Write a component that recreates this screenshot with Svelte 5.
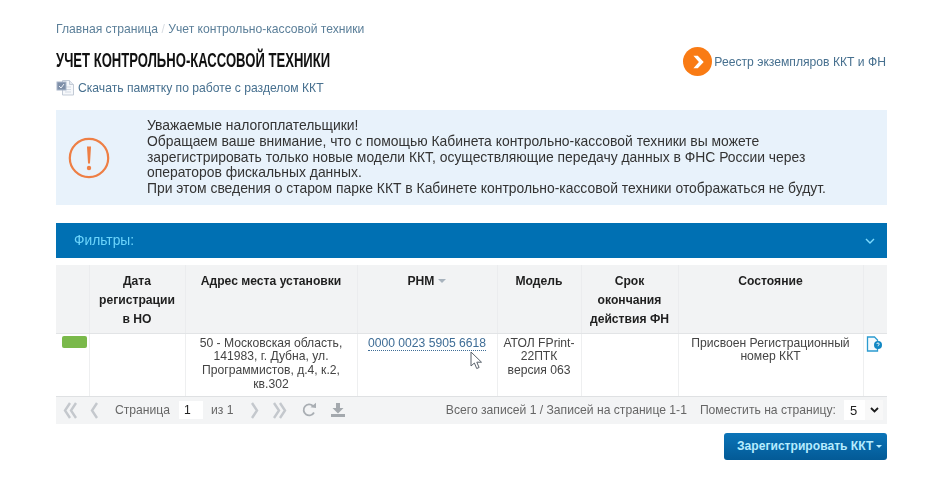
<script>
  const columns = [
    { title: 'Дата регистрации в НО', width: 96 },
    { title: 'Адрес места установки', width: 172 },
    { title: 'РНМ', width: 140, sort: true },
    { title: 'Модель', width: 84 },
    { title: 'Срок окончания действия ФН', width: 97 },
    { title: 'Состояние', width: 185 }
  ]
</script>

<div class="page">
  <nav class="crumbs">
    <a href="#home">Главная страница</a><span class="sep">/</span><a href="#kkt">Учет контрольно-кассовой техники</a>
  </nav>

  <div class="head">
    <div>
      <h1>Учет контрольно-кассовой техники</h1>
      <a class="memo" href="#memo">
        <svg width="19" height="17" viewBox="0 0 19 17">
          <path d="M6.5 1.5h7l4 4v10.5h-11z" fill="#f6f8fb" stroke="#c3cbd6"/>
          <path d="M13.5 1.5v4h4" fill="#e3e8ef" stroke="#c3cbd6"/>
          <path d="M9 8h6M9 10.5h6M9 13h6" stroke="#d3d9e2"/>
          <rect x="1" y="3" width="9" height="8" fill="#7e8fa8" stroke="#a9b6c9"/>
          <path d="M3 7l2 2 3-4" fill="none" stroke="#eef2f7"/>
        </svg>
        Скачать памятку по работе с разделом ККТ
      </a>
    </div>
    <a class="registry" href="#registry">
      <span class="go">
        <svg width="16" height="16" viewBox="0 0 14 14"><path d="M3 1.500h3.800L12 7l-5.200 5.500H3L7.800 7z" fill="#fff"/></svg>
      </span>
      Реестр экземпляров ККТ и ФН
    </a>
  </div>

  <section class="notice">
    <svg class="warn" width="42" height="42" viewBox="0 0 42 42">
      <circle cx="21" cy="21" r="19.2" fill="none" stroke="#ee7f45" stroke-width="2.2"/>
      <path d="M19 9.500h4l-1 17h-2z" fill="#ee7f45"/>
      <circle cx="21" cy="31" r="2.200" fill="#ee7f45"/>
    </svg>
    <p>
      Уважаемые налогоплательщики!<br />
      Обращаем ваше внимание, что с помощью Кабинета контрольно-кассовой техники вы можете
      зарегистрировать только новые модели ККТ, осуществляющие передачу данных в ФНС России через
      операторов фискальных данных.<br />
      При этом сведения о старом парке ККТ в Кабинете контрольно-кассовой техники отображаться не будут.
    </p>
  </section>

  <div class="filters">
    <span>Фильтры:</span>
    <svg width="10" height="6" viewBox="0 0 10 6"><path d="M1 1l4 4 4-4" fill="none" stroke="#7fdcff" stroke-width="1.4"/></svg>
  </div>

  <table>
    <colgroup>
      <col style="width: 33px" />
      {#each columns as col}
        <col style="width: {col.width}px" />
      {/each}
      <col />
    </colgroup>
    <thead>
      <tr>
        <th></th>
        {#each columns as col}
          <th>{col.title}{#if col.sort}<i class="sort"></i>{/if}</th>
        {/each}
        <th></th>
      </tr>
    </thead>
    <tbody>
      <tr>
        <td class="status"><span class="pill"></span></td>
        <td></td>
        <td>50 - Московская область, 141983, г. Дубна, ул. Программистов, д.4, к.2, кв.302</td>
        <td class="rnm">
          <a href="#rnm">0000 0023 5905 6618</a>
          <svg class="cursor" width="13" height="19" viewBox="0 0 13 19">
            <path d="M1 1v14l3.4-3 2.3 5.5 2.4-1-2.3-5.3H11.5z" fill="#fff" stroke="#59616b" stroke-width="1"/>
          </svg>
        </td>
        <td class="model">АТОЛ FPrint-22ПТК<br />версия 063</td>
        <td></td>
        <td>Присвоен Регистрационный номер ККТ</td>
        <td class="action">
          <svg width="17" height="17" viewBox="0 0 17 17">
            <path d="M1.5 1h7l3 3v11h-10z" fill="#f4fafd" stroke="#2b9bd0" stroke-width="1.3"/>
            <circle cx="12" cy="9" r="4" fill="#1188c4"/>
            <path d="M10.8 8a1.2 1.2 0 1 1 1.6 1.3c-.4.2-.4.4-.4.9" fill="none" stroke="#fff"/>
          </svg>
        </td>
      </tr>
    </tbody>
  </table>

  <div class="pager">
    <svg class="arrow" width="15" height="17" viewBox="0 0 15 17"><path d="M7 1L2 8.500 7 16M13 1L8 8.500 13 16" /></svg>
    <svg class="arrow prev" width="10" height="17" viewBox="0 0 10 17"><path d="M8 1L3 8.500 8 16" /></svg>
    <span class="page-label">Страница</span>
    <span class="field">1</span>
    <span>из 1</span>
    <svg class="arrow next" width="10" height="17" viewBox="0 0 10 17"><path d="M2 1l5 7.500L2 16" /></svg>
    <svg class="arrow" width="15" height="17" viewBox="0 0 15 17"><path d="M2 1l5 7.500L2 16M8 1l5 7.500L8 16" /></svg>
    <svg class="refresh" width="16" height="16" viewBox="0 0 16 16">
      <path d="M13 10.500A5.500 5.500 0 1 1 12 4" fill="none" stroke="#a9aeb3" stroke-width="1.800"/>
      <path d="M9.500 5.200L15 6V.8z" fill="#a9aeb3"/>
    </svg>
    <svg class="save" width="14" height="14" viewBox="0 0 14 14">
      <path d="M5 0h4v5h3.500L7 10.500 1.500 5H5zM0 11h14v3H0z" fill="#a4a9ae"/>
    </svg>
    <span class="total">Всего записей 1 / Записей на странице 1-1</span>
    <span class="per">Поместить на страницу:</span>
    <span class="select">
      <span class="value">5</span>
      <span class="caret"><svg width="9" height="6" viewBox="0 0 9 6"><path d="M1 1l3.500 3.500L8 1" fill="none" stroke="#1c1c1c" stroke-width="1.800"/></svg></span>
    </span>
  </div>

  <div class="actions">
    <button type="button">Зарегистрировать ККТ<i></i></button>
  </div>
</div>

<style>
  :global(body) {
    margin: 0;
    background: #fff;
  }
  .page {
    box-sizing: border-box;
    width: 945px;
    height: 482px;
    padding: 22px 58px 0 56px;
    overflow: hidden;
    font-family: "Liberation Sans", Arial, sans-serif;
    font-size: 12.15px;
    color: #3c3c3c;
    filter: blur(0.35px);
  }
  a {
    color: #47708f;
    text-decoration: none;
  }
  .crumbs {
    line-height: 14px;
    color: #5b7f99;
  }
  .crumbs a {
    color: #5b7f99;
  }
  .sep {
    margin: 0 3.500px;
    color: #d8dde2;
  }
  .head {
    display: flex;
    justify-content: space-between;
    align-items: flex-start;
  }
  h1 {
    margin: 12px 0 0;
    font-family: "Liberation Sans", sans-serif;
    font-size: 21px;
    line-height: 23px;
    font-weight: 700;
    text-transform: uppercase;
    color: #111;
    transform: scaleX(0.623);
    transform-origin: left center;
    white-space: nowrap;
  }
  .memo {
    display: flex;
    align-items: center;
    gap: 3px;
    margin-top: 8px;
    height: 17px;
  }
  .registry {
    display: flex;
    align-items: center;
    gap: 2px;
    margin: 11px 1px 0 0;
  }
  .go {
    display: flex;
    align-items: center;
    justify-content: center;
    width: 29px;
    height: 29px;
    border-radius: 50%;
    background: #f97b14;
  }
  .notice {
    display: flex;
    align-items: center;
    height: 95px;
    margin-top: 14px;
    background: #e8f2fb;
  }
  .warn {
    margin-left: 12px;
    flex: none;
  }
  .notice p {
    margin: 0 0 0 37px;
    width: 690px;
    font-size: 13.9px;
    line-height: 15.8px;
    color: #333;
  }
  .filters {
    display: flex;
    justify-content: space-between;
    align-items: center;
    height: 35px;
    margin-top: 18px;
    padding: 0 12px 0 18px;
    background: #0070b3;
    color: #6cd5fc;
    font-size: 13.8px;
  }
  table {
    width: 100%;
    margin-top: 7px;
    border-collapse: collapse;
    table-layout: fixed;
    text-align: center;
  }
  th {
    height: 68px;
    padding: 7px 8px 0;
    box-sizing: border-box;
    vertical-align: top;
    line-height: 19px;
    font-weight: 700;
    color: #1f1f1f;
    background: #f2f3f4;
    border-right: 1px solid #ebecee;
    border-bottom: 1px solid #e2e4e6;
  }
  th:nth-child(6) {
    padding: 7px 3px 0;
  }
  td {
    height: 63px;
    padding: 3px 6px 0;
    box-sizing: border-box;
    vertical-align: top;
    line-height: 13.8px;
    color: #444;
    border-right: 1px solid #eeeff0;
    border-bottom: 1px solid #dfe1e3;
  }
  th:last-child,
  td:last-child {
    border-right: 0;
  }
  .sort {
    display: inline-block;
    margin-left: 4px;
    vertical-align: 2px;
    border: 4px solid transparent;
    border-top-color: #a8b3bd;
    border-bottom: 0;
  }
  .status {
    padding: 2px 0 0 6px;
  }
  .pill {
    display: block;
    width: 25px;
    height: 12px;
    border-radius: 2px;
    background: #7ab94a;
  }
  .rnm {
    position: relative;
    padding: 3px 0 0;
  }
  .rnm a {
    color: #3f6d96;
    border-bottom: 1px dotted #3f6d96;
  }
  .cursor {
    position: absolute;
    left: 112px;
    top: 17px;
  }
  .model {
    padding: 3px 3px 0;
  }
  .action {
    padding: 2px 0 0 2px;
    text-align: left;
  }
  .pager {
    display: flex;
    align-items: center;
    height: 27px;
    padding: 0 4px 0 7px;
    background: #f3f4f5;
    color: #666;
  }
  .arrow path {
    fill: none;
    stroke: #c4c8cd;
    stroke-width: 2.400;
  }
  .prev {
    margin-left: 11px;
  }
  .page-label {
    margin-left: 16px;
  }
  .field {
    box-sizing: border-box;
    width: 24px;
    height: 18px;
    margin: 0 8px 0 9px;
    padding-left: 5px;
    line-height: 18px;
    background: #fff;
    color: #222;
  }
  .next {
    margin-left: 16px;
  }
  .next + .arrow {
    margin-left: 12px;
  }
  .refresh {
    margin-left: 14px;
  }
  .save {
    margin-left: 14px;
  }
  .total {
    margin-left: auto;
  }
  .per {
    margin-left: 13px;
  }
  .select {
    display: flex;
    align-items: center;
    margin-left: 8px;
    height: 20px;
    background: #fff;
    color: #222;
  }
  .value {
    width: 19px;
    padding-left: 6px;
    box-sizing: border-box;
    font-size: 13px;
  }
  .caret {
    display: flex;
    align-items: center;
    justify-content: center;
    width: 18px;
    height: 20px;
    margin-left: 2px;
    background: #f8f8f8;
  }
  .actions {
    display: flex;
    justify-content: flex-end;
    margin-top: 9px;
  }
  button {
    display: flex;
    align-items: center;
    width: 163px;
    height: 27px;
    padding: 0 0 0 13px;
    border: 0;
    border-radius: 3px;
    background: linear-gradient(#0b74b8, #035a96);
    color: #b5ecff;
    font: 700 12.1px "Liberation Sans", Arial, sans-serif;
  }
  button i {
    margin-left: 3px;
    border: 3px solid transparent;
    border-top-color: #b5ecff;
    border-bottom: 0;
  }
</style>
